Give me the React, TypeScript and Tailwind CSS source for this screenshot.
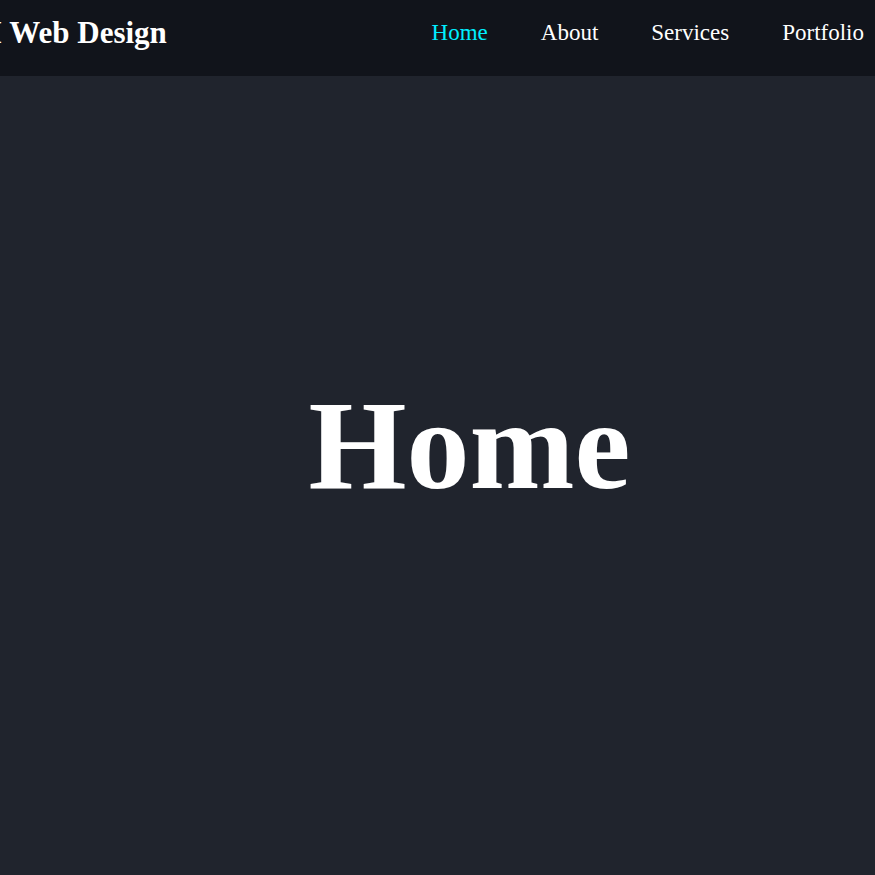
const links = ["Home", "About", "Services", "Portfolio"];

export default function App() {
  return (
    <div className="flex min-h-screen flex-col overflow-hidden bg-[#20242d] font-['Liberation_Serif',serif] text-white">
      <header className="flex h-[76px] items-start justify-between bg-[#11141b] pt-3 pr-[11px]">
        <a href="#home" className="-ml-2.5 text-[31px] leading-[42px] font-bold whitespace-nowrap">
          I Web Design
        </a>
        <nav className="flex gap-[53px] text-[23px] leading-[42px]">
          {links.map((link) => (
            <a
              key={link}
              href={`#${link.toLowerCase()}`}
              className={link === "Home" ? "text-[#00eeff]" : "text-white"}
            >
              {link}
            </a>
          ))}
        </nav>
      </header>
      <main className="flex flex-1 items-center justify-center pb-15 pl-16">
        <h1 className="text-[126px] leading-none font-bold">Home</h1>
      </main>
    </div>
  );
}
